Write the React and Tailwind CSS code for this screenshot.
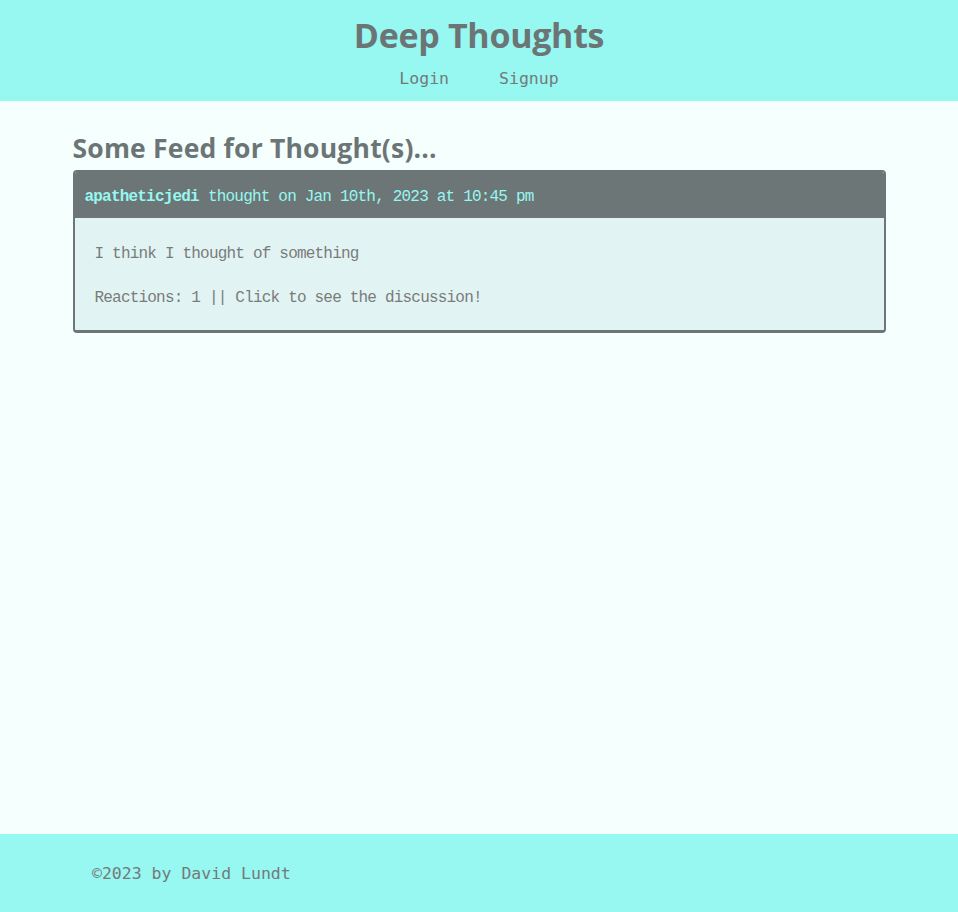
export default function App() {
  const mono = "font-['Liberation_Mono',monospace] tracking-[-0.8px]";
  return (
    <div className="min-h-screen flex flex-col bg-[#f5fffe] text-[#6c7575]">
      <header className="bg-[#97f7f1] h-[101px] flex flex-col items-center pt-[12px]">
        <h1 className="font-['Open_Sans',sans-serif] font-bold text-[34px] leading-[46px] tracking-[-0.3px] text-[#6c7575]">
          Deep Thoughts
        </h1>
        <nav className="flex gap-[50px] mt-[9px] font-['DejaVu_Sans_Mono',monospace] text-[16.5px] leading-[24px] text-[#727a7a]">
          <a href="#">Login</a>
          <a href="#">Signup</a>
        </nav>
      </header>

      <main className="flex-1 w-[813px] mx-auto pt-[30px]">
        <h2 className="font-['Open_Sans',sans-serif] font-bold text-[26.5px] leading-[34px] tracking-[0.2px] mb-[5px] text-[#6c7575]">
          Some Feed for Thought(s)...
        </h2>
        <div className="border-2 border-b-[3px] border-[#6c7676] rounded-[4px] overflow-hidden">
          <div className={`bg-[#6c7676] text-[#97f7f1] h-[46px] flex items-center px-[10px] pt-[4px] text-[16px] ${mono}`}>
            <span className="font-bold">apatheticjedi</span>
            <span className="ml-[9px]">thought on Jan 10th, 2023 at 10:45 pm</span>
          </div>
          <div className={`bg-[#e1f4f3] px-[20px] pt-[24px] pb-[20px] text-[16px] leading-[24px] text-[#7a7c7a] ${mono}`}>
            <p>I think I thought of something</p>
            <p className="mt-[20px]">Reactions: 1 || Click to see the discussion!</p>
          </div>
        </div>
      </main>

      <footer className="bg-[#97f7f1] h-[78px] flex items-center px-[92px]">
        <p className="font-['DejaVu_Sans_Mono',monospace] text-[16.5px] text-[#727a7a] pt-[2px]">
          ©2023 by David Lundt
        </p>
      </footer>
    </div>
  );
}
